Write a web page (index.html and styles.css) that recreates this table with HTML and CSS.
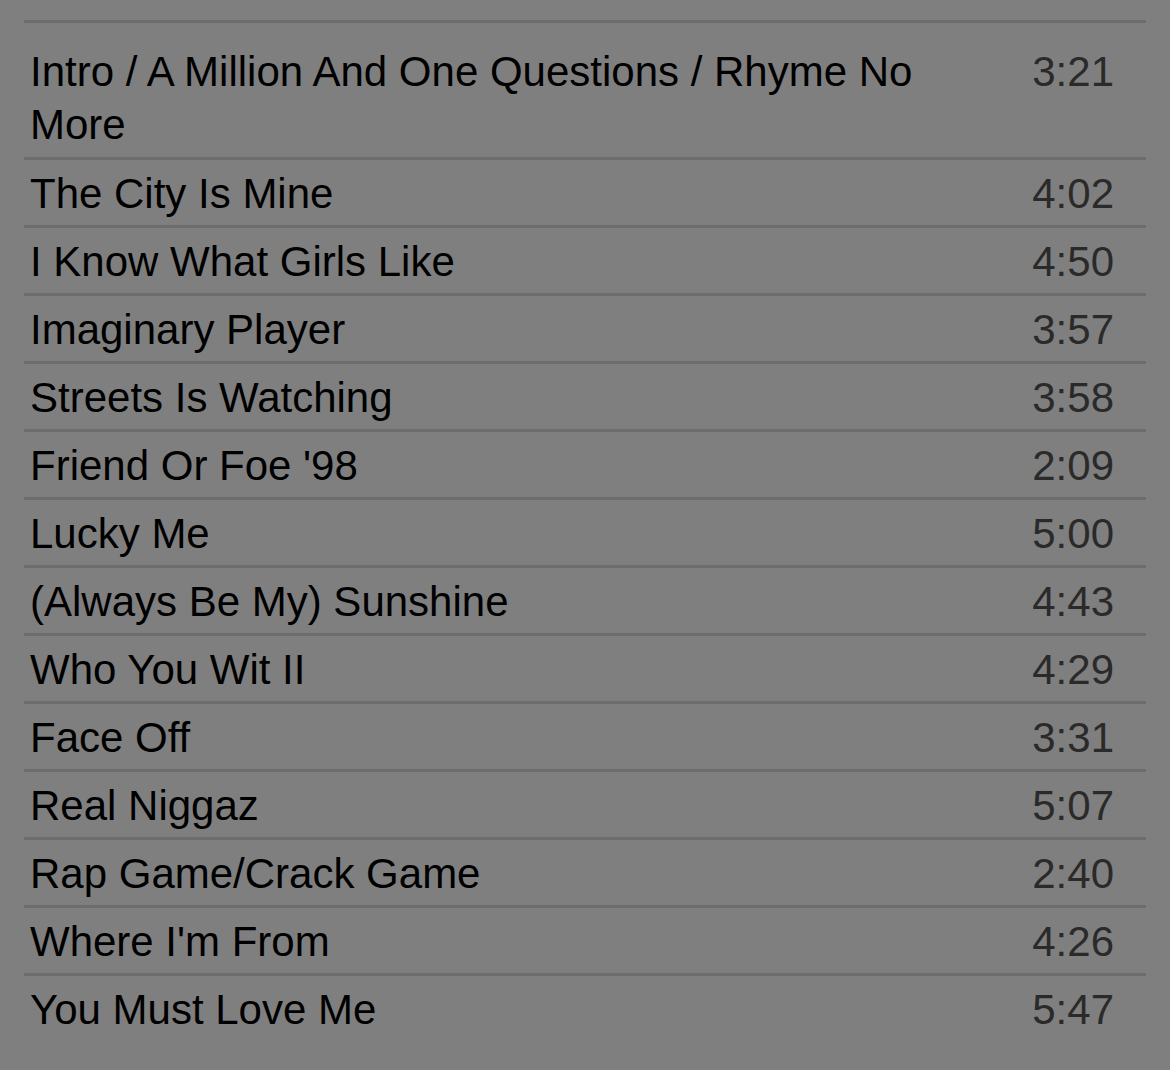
FILE: index.html
```html
<!DOCTYPE html>
<html lang="en">
<head>
<meta charset="utf-8">
<title>Tracklist</title>
<link rel="stylesheet" href="styles.css">
</head>
<body>
<ol class="tracklist">
  <li class="track"><span class="title">Intro / A Million And One Questions / Rhyme No More</span><span class="time">3:21</span></li>
  <li class="track"><span class="title">The City Is Mine</span><span class="time">4:02</span></li>
  <li class="track"><span class="title">I Know What Girls Like</span><span class="time">4:50</span></li>
  <li class="track"><span class="title">Imaginary Player</span><span class="time">3:57</span></li>
  <li class="track"><span class="title">Streets Is Watching</span><span class="time">3:58</span></li>
  <li class="track"><span class="title">Friend Or Foe '98</span><span class="time">2:09</span></li>
  <li class="track"><span class="title">Lucky Me</span><span class="time">5:00</span></li>
  <li class="track"><span class="title">(Always Be My) Sunshine</span><span class="time">4:43</span></li>
  <li class="track"><span class="title">Who You Wit II</span><span class="time">4:29</span></li>
  <li class="track"><span class="title">Face Off</span><span class="time">3:31</span></li>
  <li class="track"><span class="title">Real Niggaz</span><span class="time">5:07</span></li>
  <li class="track"><span class="title">Rap Game/Crack Game</span><span class="time">2:40</span></li>
  <li class="track"><span class="title">Where I'm From</span><span class="time">4:26</span></li>
  <li class="track"><span class="title">You Must Love Me</span><span class="time">5:47</span></li>
</ol>
</body>
</html>
```

FILE: styles.css
```css
html, body {
  margin: 0;
  padding: 0;
  background: #7f7f7f;
}

body {
  font-family: "Liberation Sans", Arial, sans-serif;
  font-size: 42px;
  line-height: 53px;
  color: #000;
}

.tracklist {
  list-style: none;
  margin: 20px 24px 0 24px;
  padding: 15px 0 0 0;
  border-top: 3px solid #6d6d6d;
}

.track {
  display: grid;
  grid-template-columns: 1fr auto;
  column-gap: 60px;
  padding: 7px 32px 5px 6px;
}

.track + .track {
  border-top: 3px solid #6d6d6d;
}

.track:first-child {
  padding-bottom: 6px;
}

.title {
  color: #000;
}

.time {
  color: #2a2a2a;
  text-align: right;
}
```
